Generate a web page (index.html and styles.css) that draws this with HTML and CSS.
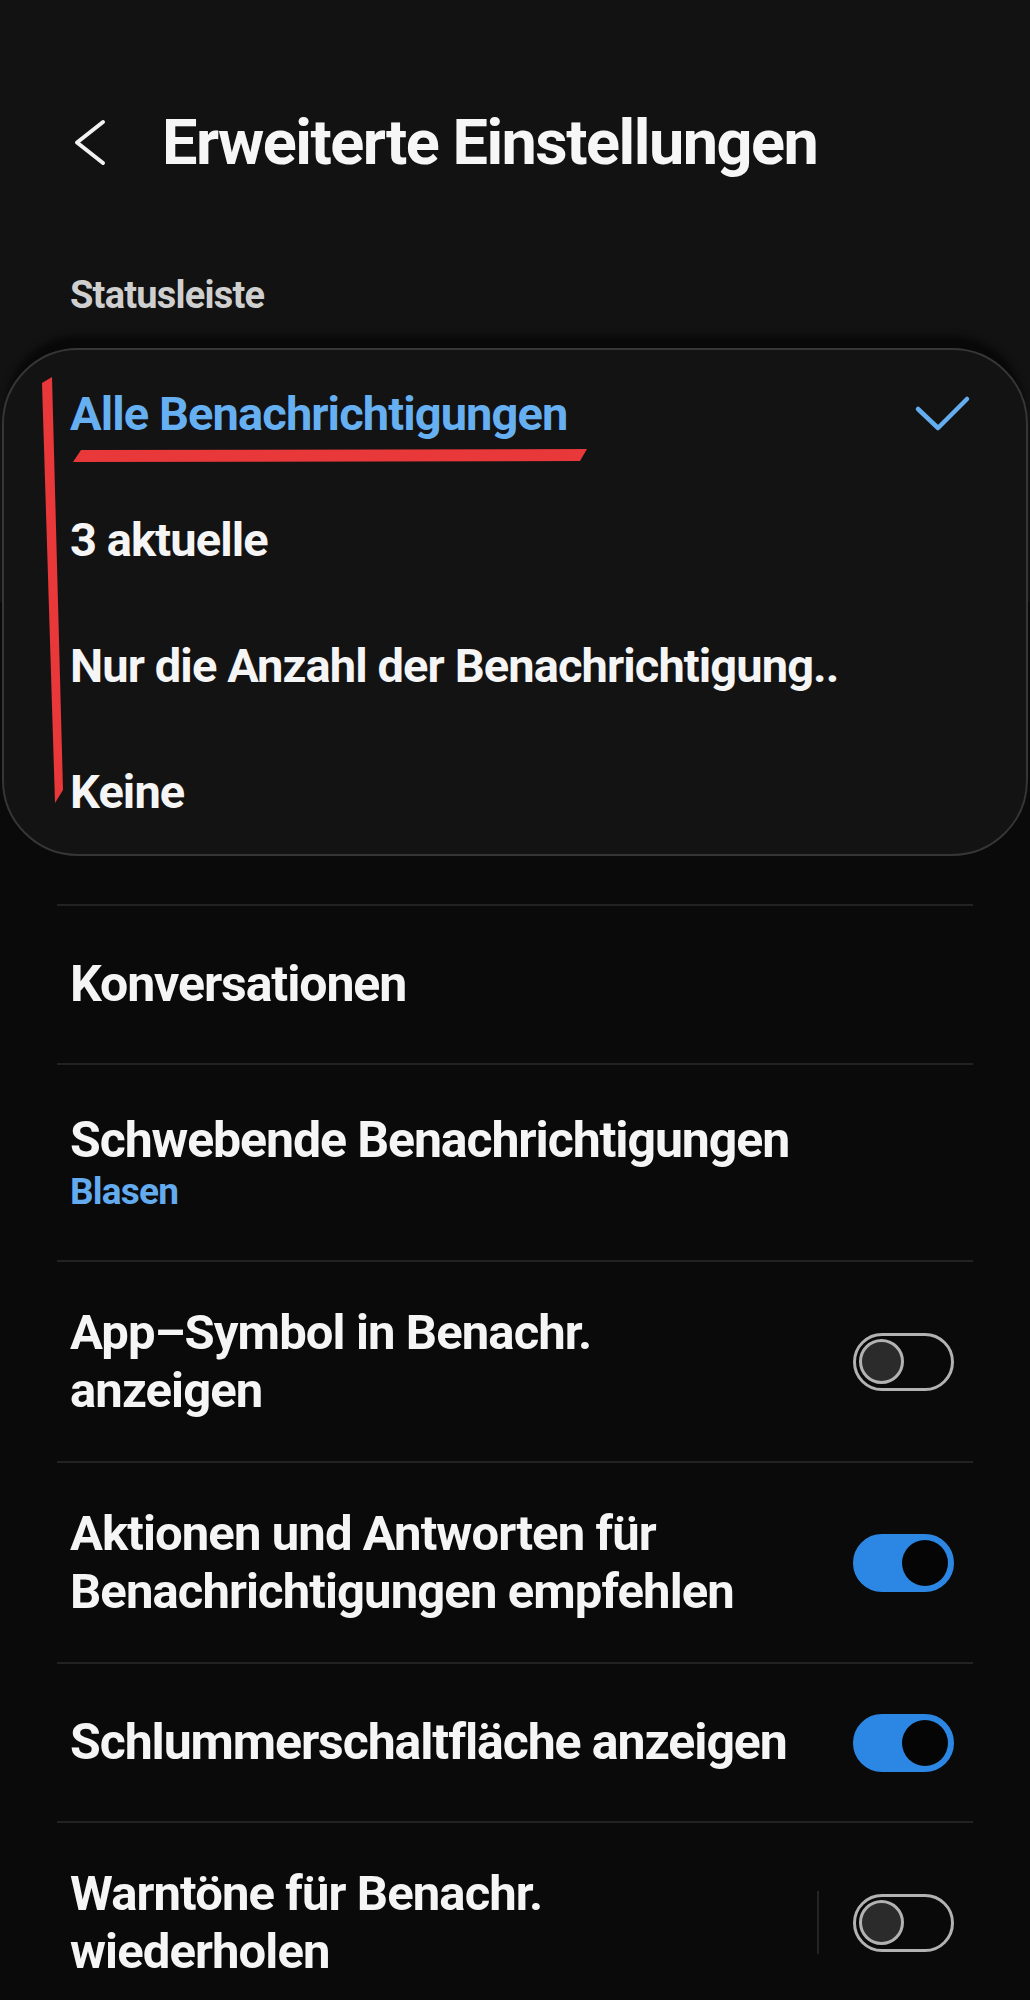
FILE: index.html
```html
<!DOCTYPE html>
<html lang="de">
<head>
    <meta charset="UTF-8">
    <meta name="viewport" content="width=device-width, initial-scale=1.0">
    <title>Erweiterte Einstellungen</title>
    <link rel="stylesheet" href="styles.css">
</head>
<body>

<div class="top">
    <header class="appbar">
        <svg class="back" width="36" height="50" viewBox="0 0 36 50">
            <polyline points="31,4 5,24.5 31,45" fill="none" stroke="#f2f2f2" stroke-width="4" stroke-linecap="round" stroke-linejoin="round"/>
        </svg>
        <h1>Erweiterte Einstellungen</h1>
    </header>
    <p class="section-label">Statusleiste</p>
</div>

<div class="sheet">
    <div class="card">
        <div class="opt selected">
            <span>Alle Benachrichtigungen</span>
            <svg class="check" width="58" height="40" viewBox="0 0 58 40">
                <polyline points="5,15 25,34 54,5" fill="none" stroke="#64aef0" stroke-width="4.5" stroke-linecap="round" stroke-linejoin="round"/>
            </svg>
        </div>
        <div class="opt">3 aktuelle</div>
        <div class="opt">Nur die Anzahl der Benachrichtigung..</div>
        <div class="opt">Keine</div>

        <!-- rote Markierungen aus dem Screenshot -->
        <svg class="marks" width="1026" height="507" viewBox="0 0 1026 507">
            <polygon points="40,35 50,29 61,442 53,455" fill="#e8383a"/>
            <polygon points="71,114 79,102 585,101 578,113" fill="#e8383a"/>
        </svg>
    </div>
</div>

<div class="list">
    <div class="row">
        <div class="label">Konversationen</div>
    </div>
    <div class="row tall short">
        <div class="label">
            Schwebende Benachrichtigungen
            <div class="sub">Blasen</div>
        </div>
    </div>
    <div class="row tall">
        <div class="label two">App–Symbol in Benachr.<br>anzeigen</div>
        <span class="switch"><span class="knob"></span></span>
    </div>
    <div class="row tall">
        <div class="label two">Aktionen und Antworten für<br>Benachrichtigungen empfehlen</div>
        <span class="switch on"><span class="knob"></span></span>
    </div>
    <div class="row">
        <div class="label">Schlummerschaltfläche anzeigen</div>
        <span class="switch on"><span class="knob"></span></span>
    </div>
    <div class="row tall">
        <div class="label two">Warntöne für Benachr.<br>wiederholen</div>
        <div class="right">
            <span class="vline"></span>
            <span class="switch"><span class="knob"></span></span>
        </div>
    </div>
</div>

</body>
</html>
```

FILE: styles.css
```css
body {
    margin: 0;
    background: #0a0a0a;
    color: #f5f5f5;
    font-family: Roboto, "Noto Sans", sans-serif;
}
.top {
    background: #121212;
    padding-top: 106px;
}
.appbar {
    display: flex;
    align-items: center;
    padding-left: 72px;
}
.appbar h1 {
    margin: 0 0 0 54px;
    font-size: 63px;
    font-weight: 700;
    line-height: 74px;
    letter-spacing: -1.5px;
    color: #f6f6f6;
}
.section-label {
    margin: 0;
    padding: 93px 0 30px 70px;
    font-size: 38px;
    font-weight: 700;
    line-height: 45px;
    letter-spacing: -0.8px;
    color: #cfcfcf;
}
.sheet {
    background: linear-gradient(to bottom, #121212 50%, #0a0a0a 50%);
    padding: 0 2px;
}
.card {
    position: relative;
    background: #131313;
    border: 2px solid #363636;
    border-radius: 76px;
    box-shadow: 0 -16px 6px -4px rgba(0, 0, 0, 0.55);
}
.opt {
    height: 126px;
    display: flex;
    align-items: center;
    justify-content: space-between;
    padding: 0 55px 0 66px;
    font-size: 47px;
    font-weight: 700;
    letter-spacing: -0.9px;
}
.opt.selected {
    color: #66b0f2;
}
.check {
    margin-top: 2px;
}
.marks {
    position: absolute;
    top: -2px;
    left: -2px;
    pointer-events: none;
}
.list {
    padding: 48px 57px 0 57px;
}
.row {
    height: 157px;
    display: flex;
    align-items: center;
    justify-content: space-between;
    border-top: 2px solid #222;
    padding: 0 19px 0 13px;
}
.row.tall {
    height: 199px;
}
.row.short {
    height: 195px;
}
.label {
    font-size: 50px;
    font-weight: 700;
    line-height: 59px;
    letter-spacing: -1.1px;
}
.label.two {
    font-size: 49px;
    line-height: 58px;
    letter-spacing: -0.9px;
}
.sub {
    margin-top: 0;
    font-size: 37px;
    line-height: 44px;
    letter-spacing: -0.8px;
    color: #63aaee;
}
.right {
    display: flex;
    align-items: center;
    gap: 34px;
}
.vline {
    width: 2px;
    height: 63px;
    background: #242424;
}
.switch {
    box-sizing: border-box;
    width: 101px;
    height: 58px;
    display: flex;
    align-items: center;
    justify-content: flex-start;
    padding: 0 3px;
    border: 3px solid #b2b2b2;
    border-radius: 29px;
    background: #090909;
}
.knob {
    box-sizing: border-box;
    width: 45px;
    height: 45px;
    border-radius: 50%;
    border: 3px solid #b2b2b2;
    background: #2b2b2b;
}
.switch.on {
    justify-content: flex-end;
    border-color: #2b87e3;
    background: #2b87e3;
}
.switch.on .knob {
    width: 46px;
    height: 46px;
    border: none;
    background: #050505;
}
```
